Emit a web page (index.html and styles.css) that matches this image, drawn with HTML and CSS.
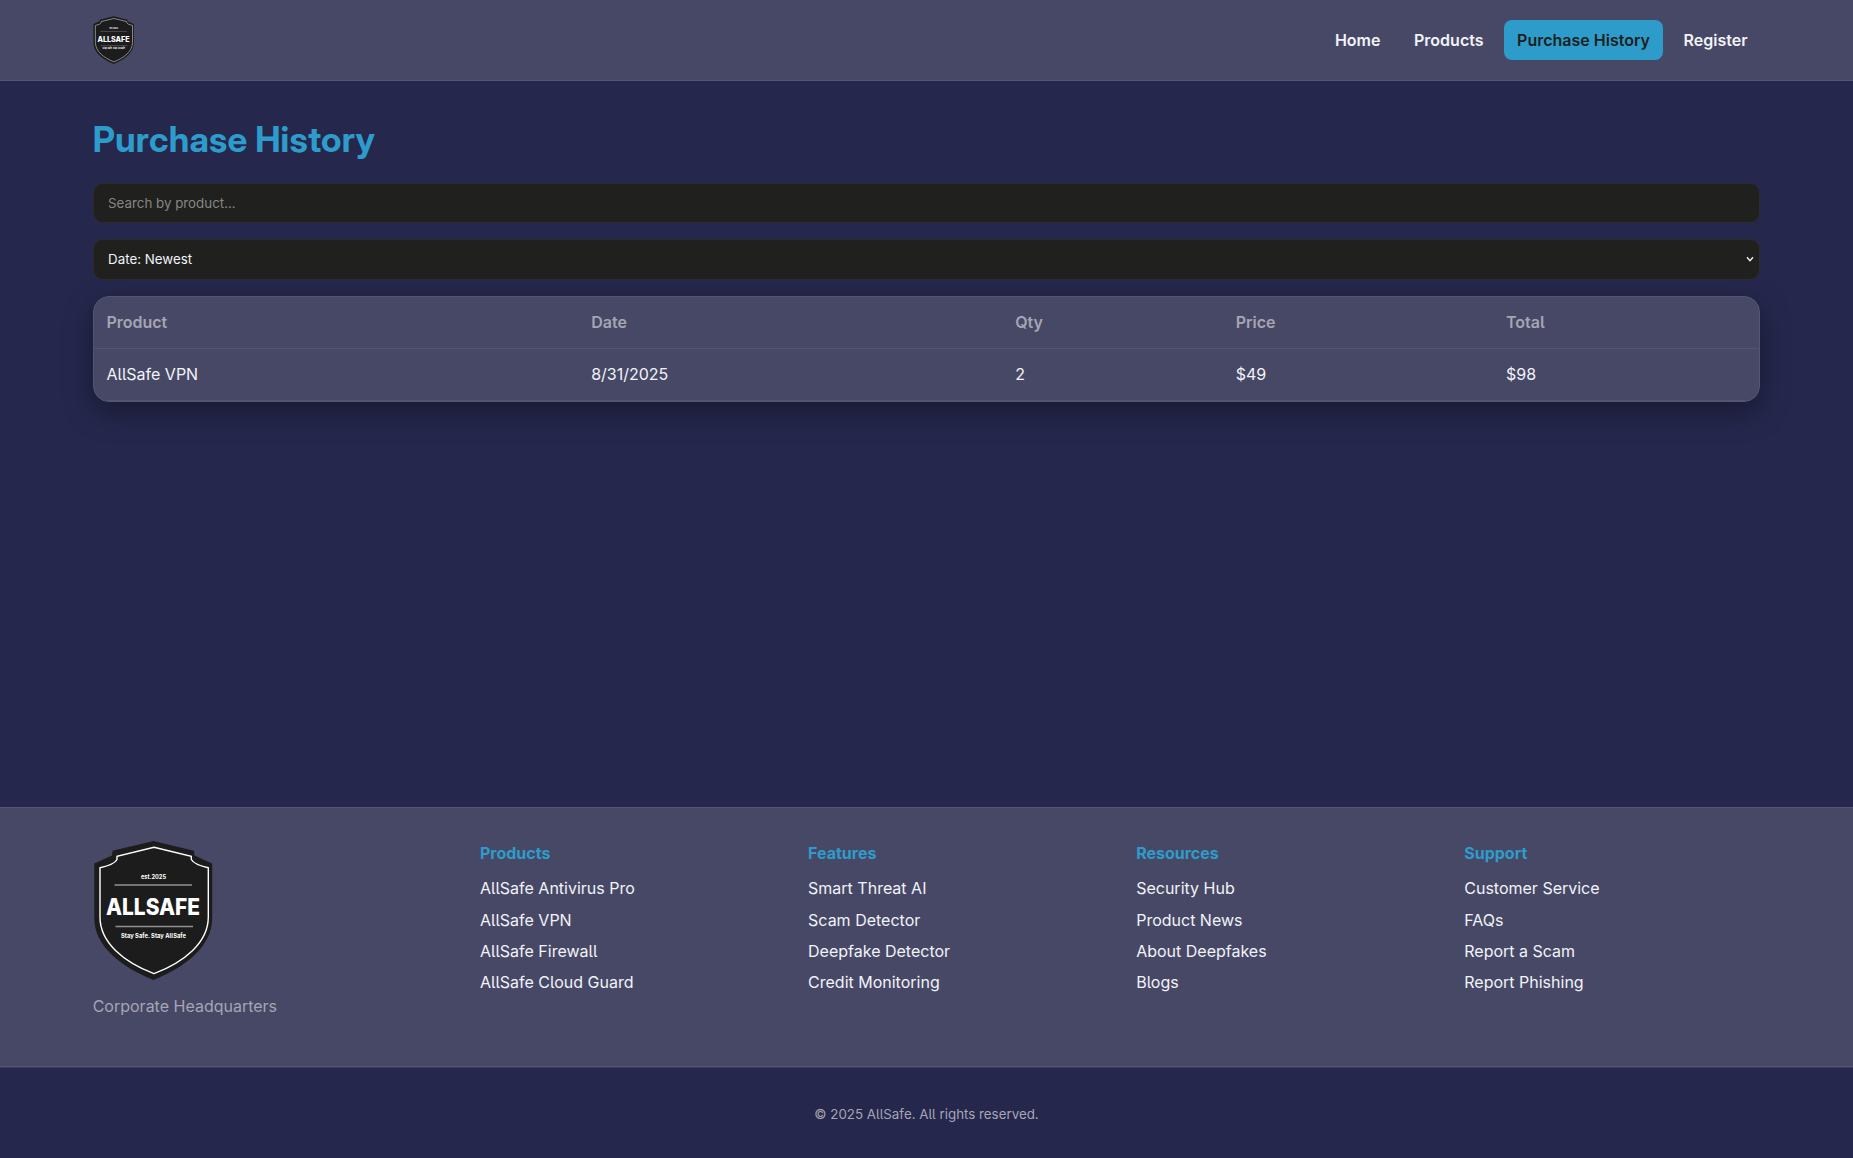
FILE: index.html
```html
<!DOCTYPE html>
<html lang="en">
<head>
<meta charset="utf-8">
<title>Purchase History</title>
<link rel="stylesheet" href="styles.css">
</head>
<body>
<header class="site-header">
  <div class="container header-inner">
    <a class="brand">
      <svg class="brand-logo" viewBox="0 0 120 140">
        <path fill="#1c1c1c" d="M60.5 1 101 10.700 101.500 15.500 119.200 23.500V78C119.200 107 92 127 60.500 140 29 127 1.300 107 1.300 78V23.500L19 15.500 19.500 10.700Z"/>
        <path fill="none" stroke="#b9b9b7" stroke-width="2" d="M61 7.200 98.300 16.200V19.500Q101 24.500 115.300 27.700V77C115.300 103 91 122 61 133.700 31 122 7 103 7 77V27.700Q21.500 24.500 24 19.500V16.200Z"/>
        <path stroke="#77787a" stroke-width="1.500" d="M21.500 45H99M22.500 86.500H100"/>
        <g fill="#fff" font-family="Inter, sans-serif" font-weight="700">
          <text x="48" y="39" font-size="5.900" textLength="25" lengthAdjust="spacingAndGlyphs">est.2025</text>
          <text x="13" y="74.500" font-size="22.600" font-weight="800" textLength="94" lengthAdjust="spacingAndGlyphs">ALLSAFE</text>
          <text x="28" y="97.500" font-size="6.200" textLength="65" lengthAdjust="spacingAndGlyphs">Stay Safe. Stay AllSafe</text>
        </g>
      </svg>
    </a>
    <nav class="nav">
      <a class="nav-link">Home</a>
      <a class="nav-link">Products</a>
      <a class="nav-link active">Purchase History</a>
      <a class="nav-link">Register</a>
    </nav>
  </div>
</header>

<main class="container main">
  <h1 class="title">Purchase History</h1>
  <input class="field search" type="text" placeholder="Search by product...">
  <div class="sort-wrap">
    <select class="field sort">
      <option>Date: Newest</option>
    </select>
    <svg class="chevron" viewBox="0 0 8 6"><path d="M1 1.200 4 4.600 7 1.200" fill="none" stroke="#f1f3f8" stroke-width="1.400"/></svg>
  </div>
  <table class="history">
    <thead>
      <tr><th class="c-product">Product</th><th class="c-date">Date</th><th class="c-qty">Qty</th><th class="c-price">Price</th><th>Total</th></tr>
    </thead>
    <tbody>
      <tr><td>AllSafe VPN</td><td>8/31/2025</td><td>2</td><td>$49</td><td>$98</td></tr>
    </tbody>
  </table>
</main>

<footer class="site-footer">
  <div class="container footer-grid">
    <div class="footer-brand">
      <svg class="footer-logo" viewBox="0 0 120 140">
        <path fill="#1c1c1c" d="M60.5 1 101 10.700 101.500 15.500 119.200 23.500V78C119.200 107 92 127 60.500 140 29 127 1.300 107 1.300 78V23.500L19 15.500 19.500 10.700Z"/>
        <path fill="none" stroke="#fff" stroke-width="1.400" d="M61 7.200 98.300 16.200V19.500Q101 24.500 115.300 27.700V77C115.300 103 91 122 61 133.700 31 122 7 103 7 77V27.700Q21.500 24.500 24 19.500V16.200Z"/>
        <path stroke="#8e9094" stroke-width="1.300" d="M21.500 45H99M22.500 86.500H100"/>
        <g fill="#fff" font-family="Inter, sans-serif" font-weight="700">
          <text x="48" y="39" font-size="5.900" textLength="25" lengthAdjust="spacingAndGlyphs">est.2025</text>
          <text x="13" y="74.500" font-size="22.600" font-weight="800" textLength="94" lengthAdjust="spacingAndGlyphs">ALLSAFE</text>
          <text x="28" y="97.500" font-size="6.200" textLength="65" lengthAdjust="spacingAndGlyphs">Stay Safe. Stay AllSafe</text>
        </g>
      </svg>
      <p class="hq">Corporate Headquarters</p>
    </div>
    <div class="footer-col">
      <h4 class="footer-title">Products</h4>
      <ul class="links"><li>AllSafe Antivirus Pro</li><li>AllSafe VPN</li><li>AllSafe Firewall</li><li>AllSafe Cloud Guard</li></ul>
    </div>
    <div class="footer-col">
      <h4 class="footer-title">Features</h4>
      <ul class="links"><li>Smart Threat AI</li><li>Scam Detector</li><li>Deepfake Detector</li><li>Credit Monitoring</li></ul>
    </div>
    <div class="footer-col">
      <h4 class="footer-title">Resources</h4>
      <ul class="links"><li>Security Hub</li><li>Product News</li><li>About Deepfakes</li><li>Blogs</li></ul>
    </div>
    <div class="footer-col">
      <h4 class="footer-title">Support</h4>
      <ul class="links"><li>Customer Service</li><li>FAQs</li><li>Report a Scam</li><li>Report Phishing</li></ul>
    </div>
  </div>
</footer>
<div class="copyright"><small>© 2025 AllSafe. All rights reserved.</small></div>
</body>
</html>
```
FILE: styles.css
```css
* { box-sizing: border-box; margin: 0; padding: 0; }

body {
  display: flex;
  flex-direction: column;
  height: 1158px;
  overflow: hidden;
  background: #25274d;
  color: #f1f3f8;
  font-family: Inter, sans-serif;
  font-feature-settings: "cv05";
  font-size: 16px;
  line-height: 1.6;
}

.container { width: 90%; margin: 0 auto; }

.site-header {
  height: 81px;
  background: #474866;
  border-bottom: 1px solid #555572;
}

.header-inner {
  display: flex;
  align-items: center;
  justify-content: space-between;
  height: 80px;
}

.brand { display: flex; }
.brand-logo { width: 41.140px; height: 48px; }

.nav { display: flex; gap: 8px; }

.nav-link {
  height: 40px;
  padding: 8px 12.800px 0;
  border-radius: 8px;
  font-weight: 600;
}

.nav-link.active { background: #2e9cca; color: #20201e; }

.main { flex: 1; padding-top: 32px; }

.title {
  margin-bottom: 17px;
  color: #2e9cca;
  font-family: "Inter Display", Inter, sans-serif;
  font-size: 35.200px;
  font-weight: 700;
  letter-spacing: 0.170px;
  line-height: 53px;
}

.field {
  display: block;
  width: 100%;
  border: 1px solid #2c2c2b;
  border-radius: 10px;
  background: #20201e;
  color: #f1f3f8;
  font-family: inherit;
  font-feature-settings: inherit;
  font-size: 13.333px;
}

.search { height: 40px; margin-bottom: 16px; padding: 0 14.400px 1px; }
.sort { height: 41px; padding: 0 14.400px 2px; appearance: none; }

.field::placeholder { color: #868686; }

.sort-wrap { position: relative; margin-bottom: 16px; }

.chevron {
  position: absolute;
  top: 17px;
  right: 6.300px;
  width: 8px;
  height: 6px;
  pointer-events: none;
}

.history {
  width: 100%;
  border: 1px solid #555572;
  border-collapse: separate;
  border-spacing: 0;
  border-radius: 16px;
  background: #474866;
  box-shadow: 0 10px 30px rgba(0, 0, 0, 0.35);
  overflow: hidden;
}

.history th,
.history td {
  height: 52px;
  padding: 13px 12.800px;
  border-bottom: 1px solid #555572;
  line-height: 25px;
  text-align: left;
}

.history th { color: #a5a5b3; font-weight: 600; }

.c-product { width: 484.700px; }
.c-date { width: 424px; }
.c-qty { width: 220.500px; }
.c-price { width: 270.300px; }

.site-footer {
  height: 260px;
  padding-top: 32px;
  background: #474866;
  border-top: 1px solid #555572;
  border-bottom: 1px solid #555572;
}

.footer-grid {
  display: grid;
  grid-template-columns: 1.2fr repeat(4, 1fr);
  gap: 32px;
}

.footer-logo { display: block; width: 120px; height: 140px; }
.hq { margin-top: 14px; color: #a5a5b3; }

.footer-col { padding-top: 1px; }

.footer-title {
  margin-bottom: 9.850px;
  color: #2e9cca;
  font-size: 16px;
  font-weight: 700;
}

.links { display: grid; gap: 5.600px; list-style: none; }

.copyright {
  height: 91px;
  padding-top: 33px;
  border-top: 1px solid #3a3b5f;
  color: #a5a5b3;
  text-align: center;
}

.copyright small { font-size: 13.333px; }
```
